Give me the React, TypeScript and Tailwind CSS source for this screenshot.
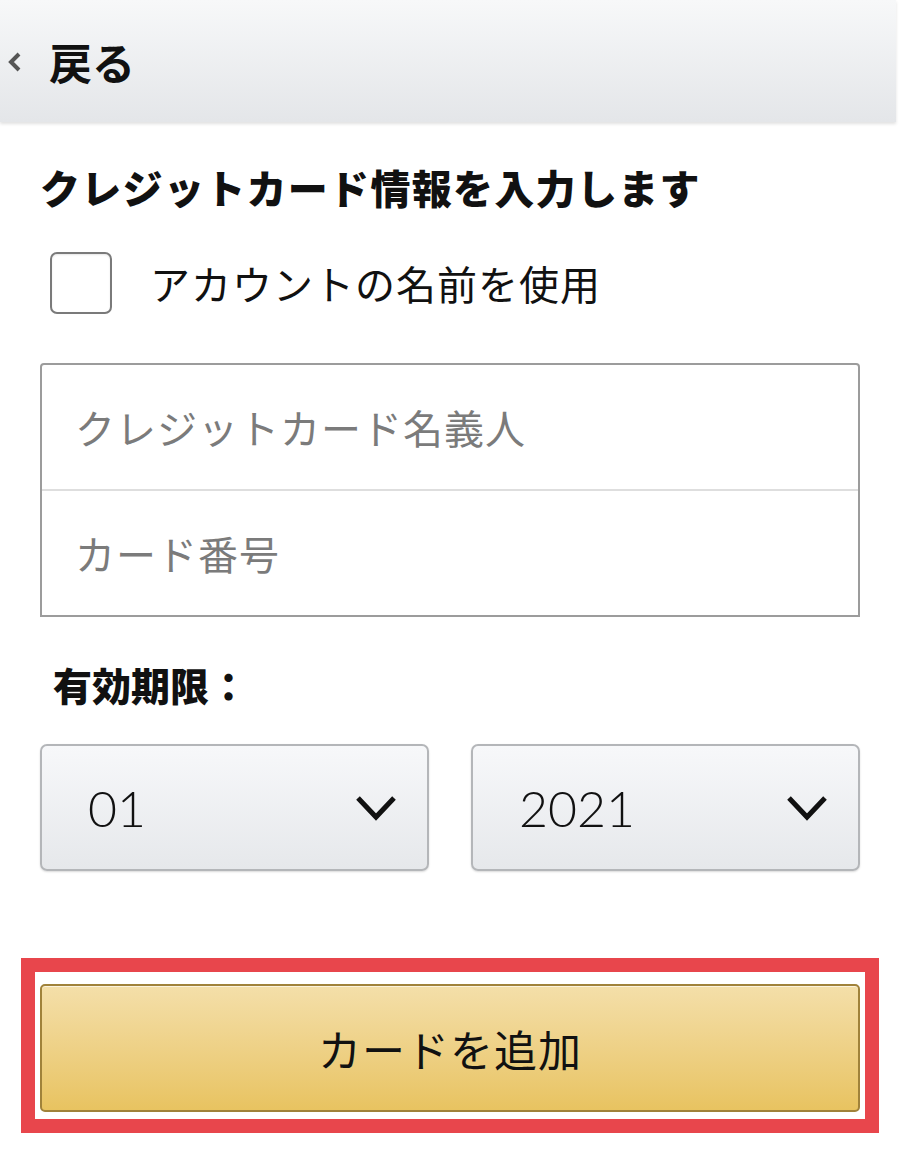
import { useState } from 'react'

const font = { fontFamily: '"Noto Sans CJK JP", "Noto Sans", sans-serif' }

export default function App() {
  const [useAccount, setUseAccount] = useState(false)

  return (
    <div className="min-h-[1163px] bg-white text-[#111]" style={font}>
      {/* Header */}
      <div className="mr-[4px] flex h-[122px] items-center bg-gradient-to-b from-[#f7f8f9] to-[#e4e6e9] pl-[7px] shadow-[0_2px_3px_rgba(0,0,0,0.12)]">
        <svg width="15" height="22" viewBox="0 0 15 22" className="mt-[2px]">
          <path d="M12 3 L4 11 L12 19" fill="none" stroke="#555" strokeWidth="4" />
        </svg>
        <span className="ml-[27px] text-[43px] font-bold leading-none">戻る</span>
      </div>

      <div className="px-[40px]">
        <h1 className="mt-[41px] text-[40px] font-black leading-[48px] tracking-[1.3px]">
          クレジットカード情報を入力します
        </h1>

        {/* Checkbox */}
        <label className="mt-[41px] ml-[10px] flex items-center">
          <button
            onClick={() => setUseAccount(!useAccount)}
            className="h-[62px] w-[62px] rounded-[7px] border-2 border-[#7a7a7a] bg-white shadow-[inset_0_1px_2px_rgba(0,0,0,0.1)]"
          />
          <span className="ml-[38px] text-[40px] leading-[48px] tracking-[1px]">アカウントの名前を使用</span>
        </label>

        {/* Inputs */}
        <div className="mt-[49px] rounded-t-[4px] border-2 border-[#9c9c9c]">
          <div className="flex h-[126px] items-center border-b-2 border-[#dedede] pl-[33px]">
            <span className="text-[40px] leading-[48px] tracking-[1px] text-[#7b7b7b]">クレジットカード名義人</span>
          </div>
          <div className="flex h-[124px] items-center pl-[33px]">
            <span className="text-[40px] leading-[48px] tracking-[1px] text-[#7b7b7b]">カード番号</span>
          </div>
        </div>

        <div className="mt-[43px] pl-[13px] text-[39px] font-black leading-[48px]">有効期限：</div>

        {/* Selects */}
        <div className="mt-[36px] grid grid-cols-2 gap-[42px]">
          <Select value="01" />
          <Select value="2021" />
        </div>

        {/* Add card */}
        <div className="mt-[87px] -mx-[19px] border-[14px] border-[#e8464c] bg-white px-[5px] pt-[12px] pb-[7px]">
          <button className="flex h-[128px] w-full items-center justify-center rounded-[5px] border-2 border-[#a0823a] bg-gradient-to-b from-[#f4dfa9] to-[#e8c360] shadow-[0_1px_0_rgba(255,255,255,0.6)_inset]">
            <span className="text-[43px] leading-none tracking-[1px] text-[#111]">カードを追加</span>
          </button>
        </div>
      </div>
    </div>
  )
}

function Select({ value }: { value: string }) {
  return (
    <div className="flex h-[127px] items-center justify-between rounded-[7px] border-2 border-[#b4b6b9] bg-gradient-to-b from-[#f7f8fa] to-[#e6e8eb] pl-[46px] pr-[30px] shadow-[0_1px_2px_rgba(0,0,0,0.15)]">
      <span className="text-[50px] font-light leading-none text-[#111]" style={{ fontFamily: 'Lato, "Noto Sans", sans-serif' }}>
        {value}
      </span>
      <svg width="42" height="28" viewBox="0 0 42 28">
        <path d="M3 4 L21 23 L39 4" fill="none" stroke="#111" strokeWidth="5" />
      </svg>
    </div>
  )
}
